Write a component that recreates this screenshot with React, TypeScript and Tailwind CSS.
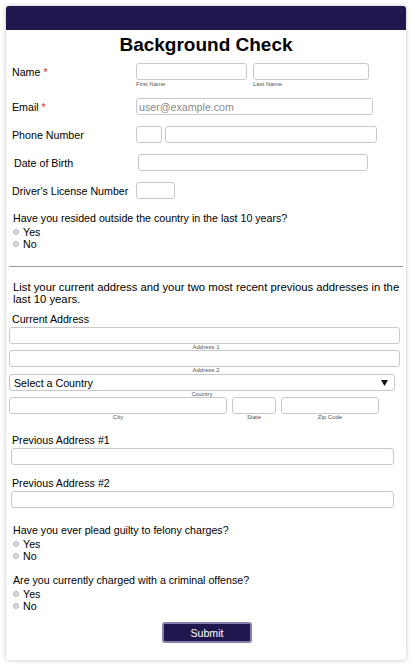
import React from 'react';

const font = { fontFamily: '"Liberation Sans", Arial, sans-serif' };

function Field({ className = '' }: { className?: string }) {
  return <div className={`h-[17px] rounded-[3px] border border-[#c8c8c8] bg-white ${className}`} />;
}

function Sub({ children }: { children: React.ReactNode }) {
  return <div className="h-[6px] text-center text-[6px] leading-[6px] text-[#555]">{children}</div>;
}

function Radio({ label }: { label: string }) {
  return (
    <div className="flex h-[12px] items-center text-[10.67px] leading-[12px] text-black">
      <span className="mr-[4px] ml-[7px] h-[6px] w-[6px] rounded-full border border-[#b5b5b5] bg-[#dcdcdc]" />
      {label}
    </div>
  );
}

function Question({ text, className = '' }: { text: string; className?: string }) {
  return (
    <div className={className}>
      <div className="h-[12px] pl-[7px] text-[10.67px] leading-[12px] text-black">{text}</div>
      <div className="mt-[2px]">
        <Radio label="Yes" />
        <Radio label="No" />
      </div>
    </div>
  );
}

function Row({ label, children, className = '', labelClass = 'pl-[6px]' }: { label: React.ReactNode; children: React.ReactNode; className?: string; labelClass?: string }) {
  return (
    <div className={`flex ${className}`}>
      <div className={`h-[17px] w-[130px] shrink-0 text-[10.67px] leading-[19px] text-black ${labelClass}`}>{label}</div>
      {children}
    </div>
  );
}

export default function App() {
  return (
    <div className="min-h-[671px] bg-white pt-[6px] pl-[6px]" style={font}>
      <div className="w-[400px] overflow-hidden rounded-[3px] bg-white pb-[17px] shadow-[0_0_4px_rgba(0,0,0,0.25)]">
        {/* header band */}
        <div className="h-[24px] bg-[#21174f]" />

        <h1 className="mt-[3px] h-[24px] text-center text-[19px] font-bold leading-[24px] text-black">Background Check</h1>

        {/* Name */}
        <Row
          className="mt-[6px]"
          label={
            <>
              Name <span className="text-[#e52b2b]">*</span>
            </>
          }
        >
          <div className="flex gap-[6px]">
            <div className="w-[111px]">
              <Field />
              <div className="h-[8px] text-[6px] leading-[8px] text-[#555]">First Name</div>
            </div>
            <div className="w-[116px]">
              <Field />
              <div className="h-[8px] text-[6px] leading-[8px] text-[#555]">Last Name</div>
            </div>
          </div>
        </Row>

        {/* Email */}
        <Row
          className="mt-[10px]"
          label={
            <>
              Email <span className="text-[#e52b2b]">*</span>
            </>
          }
        >
          <div className="flex h-[17px] w-[237px] items-center rounded-[3px] border border-[#c8c8c8] px-[2px] text-[10.67px] text-[#8a8a8a]">
            user@example.com
          </div>
        </Row>

        {/* Phone */}
        <Row className="mt-[11px]" label="Phone Number">
          <div className="flex gap-[3px]">
            <Field className="w-[26px]" />
            <Field className="w-[212px]" />
          </div>
        </Row>

        {/* DOB */}
        <Row className="mt-[11px]" label="Date of Birth" labelClass="pl-[8px]">
          <Field className="ml-[2px] w-[230px]" />
        </Row>

        {/* Driver's License */}
        <Row className="mt-[11px]" label="Driver's License Number">
          <Field className="w-[39px]" />
        </Row>

        <Question className="mt-[13px]" text="Have you resided outside the country in the last 10 years?" />

        <div className="mx-[3px] mt-[16px] h-px bg-[#9a9a9a]" />

        <p className="mt-[14px] pl-[7px] pr-[3px] text-[11.3px] leading-[12px] text-black">
          List your current address and your two most recent previous addresses in the last 10 years.
        </p>

        <div className="mt-[8px] pl-[6px] text-[10.67px] leading-[12px] text-black">Current Address</div>

        <div className="mt-[2px] px-[3px]">
          <Field className="w-[391px]" />
          <Sub>Address 1</Sub>
          <Field className="w-[391px]" />
          <Sub>Address 2</Sub>
          <div className="mt-[1px] flex h-[17px] w-[386px] items-center justify-between rounded-[3px] border border-[#c8c8c8] pl-[4px] pr-[6px] text-[10.67px] text-black">
            <span>Select a Country</span>
            <svg width="7" height="6" viewBox="0 0 7 6">
              <path d="M0 0H7L3.5 6Z" fill="#111" />
            </svg>
          </div>
          <div className="w-[386px]">
            <Sub>Country</Sub>
          </div>
          <div className="flex gap-[5px]">
            <div className="w-[218px]">
              <Field />
              <Sub>City</Sub>
            </div>
            <div className="w-[44px]">
              <Field />
              <Sub>State</Sub>
            </div>
            <div className="w-[98px]">
              <Field />
              <Sub>Zip Code</Sub>
            </div>
          </div>
        </div>

        <div className="mt-[14px] pl-[6px] text-[10.67px] leading-[12px] text-black">Previous Address #1</div>
        <Field className="mt-[2px] ml-[5px] w-[383px]" />

        <div className="mt-[12px] pl-[6px] text-[10.67px] leading-[12px] text-black">Previous Address #2</div>
        <Field className="mt-[2px] ml-[5px] w-[383px]" />

        <Question className="mt-[16px]" text="Have you ever plead guilty to felony charges?" />
        <Question className="mt-[12px]" text="Are you currently charged with a criminal offense?" />

        <div className="mt-[10px] flex justify-center">
          <button
            type="button"
            className="ml-[2px] h-[21px] w-[90px] rounded-[3px] border-2 border-[#8b80ad] bg-[#21174f] text-[10.67px] text-white"
          >
            Submit
          </button>
        </div>
      </div>
    </div>
  );
}
